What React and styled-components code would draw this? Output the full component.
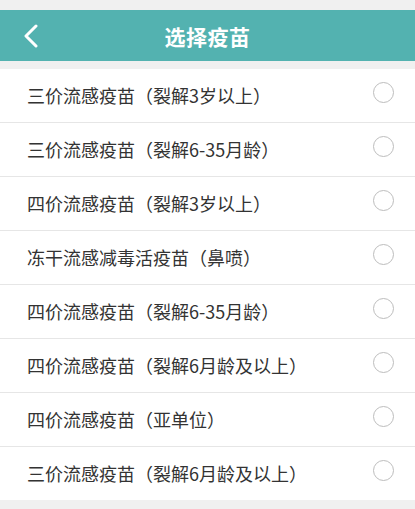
import React from 'react';
import styled, { createGlobalStyle } from 'styled-components';

const GlobalStyle = createGlobalStyle`
  html, body {
    margin: 0;
    padding: 0;
    background: #f0f0f0;
    font-family: 'Noto Sans CJK SC', 'Noto Sans', sans-serif;
  }
`;

const Page = styled.div`
  width: 415px;
  min-height: 509px;
  padding-top: 10px;
  background: #f0f0f0;
`;

const Header = {
  bar: styled.div`
    position: relative;
    height: 51px;
    display: flex;
    align-items: center;
    justify-content: center;
    background-color: #53b2b0;
  `,
  back: styled.button`
    position: absolute;
    left: 18px;
    top: 12px;
    width: 26px;
    height: 28px;
    padding: 0;
    border: none;
    background: transparent;
    display: flex;
    align-items: center;
    justify-content: center;
  `,
  title: styled.div`
    color: #ffffff;
    font-size: 21px;
    font-weight: bold;
    letter-spacing: 0.5px;
  `,
};

const List = styled.div`
  margin-top: 8px;
  background: #ffffff;
`;

const Row = styled.div`
  height: 53px;
  display: flex;
  align-items: center;
  justify-content: space-between;
  padding: 0 21px 0 27px;
  border-bottom: ${(p) => (p.$last ? 'none' : '1px solid #e6e6e6')};
  margin-bottom: ${(p) => (p.$last ? '1px' : '0')};
`;

const Label = styled.span`
  font-size: 18px;
  color: #333333;
  line-height: 1;
  margin-top: -2px;
`;

const Radio = styled.span`
  width: 21px;
  height: 21px;
  border-radius: 50%;
  border: 1px solid #bdbdbd;
  box-sizing: border-box;
  margin-top: -7px;
`;

const vaccines = [
  '三价流感疫苗（裂解3岁以上）',
  '三价流感疫苗（裂解6-35月龄）',
  '四价流感疫苗（裂解3岁以上）',
  '冻干流感减毒活疫苗（鼻喷）',
  '四价流感疫苗（裂解6-35月龄）',
  '四价流感疫苗（裂解6月龄及以上）',
  '四价流感疫苗（亚单位）',
  '三价流感疫苗（裂解6月龄及以上）',
];

export default function App() {
  return (
    <Page>
      <GlobalStyle />
      <Header.bar>
        <Header.back aria-label="back">
          <svg width="16" height="24" viewBox="0 0 16 24">
            <path d="M13 2 L3 12 L13 22" fill="none" stroke="#ffffff" strokeWidth="3" strokeLinecap="round" strokeLinejoin="round" />
          </svg>
        </Header.back>
        <Header.title>选择疫苗</Header.title>
      </Header.bar>
      <List>
        {vaccines.map((v, i) => (
          <Row key={i} $last={i === vaccines.length - 1}>
            <Label>{v}</Label>
            <Radio />
          </Row>
        ))}
      </List>
    </Page>
  );
}
